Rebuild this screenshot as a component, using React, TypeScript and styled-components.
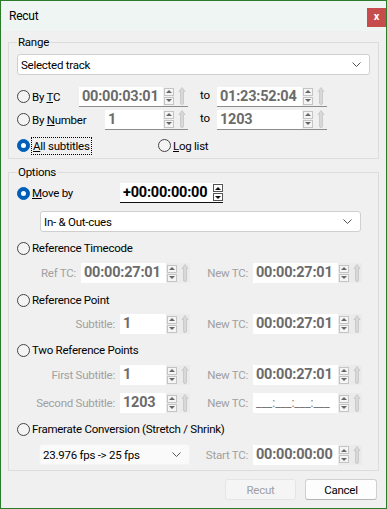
import React from "react";
import styled, { createGlobalStyle } from "styled-components";

const Global = createGlobalStyle`
  html, body { margin: 0; padding: 0; background: #ffffff; }
`;

const Window = styled.div`
  width: 387px;
  height: 509px;
  box-sizing: border-box;
  border: 1px solid #2b7d2b;
  background: #f0f0f0;
  display: flex;
  flex-direction: column;
  font-family: "Segoe UI", Roboto, "Liberation Sans", sans-serif;
  font-size: 11.5px;
  letter-spacing: -0.25px;
  color: #000;
`;

const TitleBar = styled.div`
  height: 30px;
  flex: none;
  background: #eef5f2;
  display: flex;
  align-items: flex-start;
  justify-content: space-between;
  padding-left: 8px;
`;

const Title = styled.div`
  margin-top: 7px;
  line-height: 16px;
  font-size: 12px;
`;

const CloseButton = styled.div`
  width: 19px;
  height: 19px;
  margin-top: 7px;
  background: #c74d4d;
  color: #fff;
  font-weight: 700;
  font-size: 11px;
  line-height: 1;
  display: flex;
  align-items: center;
  justify-content: center;
  padding-bottom: 2px;
  box-sizing: border-box;
`;

const Body = styled.div`
  display: flex;
  flex-direction: column;
  padding: 0 7px;
`;

const Group = styled.fieldset<{ $mt: number; $pt: number }>`
  margin: ${(p) => p.$mt}px 0 0;
  padding: ${(p) => p.$pt}px 8px 1px;
  border: 1px solid #dcdcdc;
  min-inline-size: 0;
  display: flex;
  flex-direction: column;
`;

const Legend = styled.legend`
  padding: 0 1px;
  line-height: 16px;
`;

const Combo = styled.div<{ $mt?: number; $w?: number; $ml?: number; $disabled?: boolean }>`
  margin-top: ${(p) => p.$mt || 0}px;
  margin-left: ${(p) => p.$ml || 0}px;
  width: ${(p) => (p.$w ? `${p.$w}px` : "auto")};
  height: 21px;
  box-sizing: border-box;
  background: ${(p) => (p.$disabled ? "#fafafa" : "#fff")};
  border: 1px solid ${(p) => (p.$disabled ? "#f3f3f3" : "#cfcfcf")};
  border-radius: 3px;
  display: flex;
  align-items: center;
  justify-content: space-between;
  padding: 0 8px 0 3px;
  flex: none;
`;

const Chevron = () => (
  <svg width="9" height="5" viewBox="0 0 9 5">
    <polyline points="0.5,0.5 4.5,4.5 8.5,0.5" fill="none" stroke="#555" strokeWidth="1" />
  </svg>
);

const RangeRow = styled.div<{ $mt?: number }>`
  margin-top: ${(p) => p.$mt || 0}px;
  height: 23px;
  display: flex;
  align-items: center;
`;

const RangeLeft = styled.div<{ $w?: number }>`
  width: ${(p) => p.$w || 171}px;
  flex: none;
  display: flex;
  align-items: center;
  justify-content: space-between;
`;

const To = styled.div`
  width: 29px;
  box-sizing: border-box;
  padding-left: 12px;
  padding-bottom: 3px;
`;

const RadioLabel = styled.label<{ $mt?: number; $h?: number }>`
  margin-top: ${(p) => p.$mt || 0}px;
  height: ${(p) => p.$h || 20}px;
  display: flex;
  align-items: center;
  gap: 2px;
  white-space: nowrap;
`;

const RadioCircle = styled.span<{ $checked?: boolean }>`
  width: 13px;
  height: 13px;
  box-sizing: border-box;
  border-radius: 50%;
  flex: none;
  display: flex;
  align-items: center;
  justify-content: center;
  border: 1px solid ${(p) => (p.$checked ? "#005fb8" : "#444")};
  background: ${(p) => (p.$checked ? "#005fb8" : "#f4f4f4")};
  &::after {
    content: "";
    display: ${(p) => (p.$checked ? "block" : "none")};
    width: 5px;
    height: 5px;
    border-radius: 50%;
    background: #fff;
  }
`;

const Focus = styled.span`
  outline: 1px dotted #000;
  outline-offset: 0;
  padding: 0 1px;
  line-height: 16px;
`;

const SpinBox = styled.div<{ $underline?: string }>`
  display: flex;
  height: 20px;
  box-sizing: border-box;
  border-bottom: ${(p) => (p.$underline ? `1px solid ${p.$underline}` : "none")};
`;

const Field = styled.div<{ $w: number; $color: string }>`
  width: ${(p) => p.$w}px;
  background: #fff;
  color: ${(p) => p.$color};
  font-weight: 700;
  font-size: 14.5px;
  letter-spacing: -0.2px;
  line-height: 19px;
  padding-left: 3px;
  box-sizing: border-box;
  white-space: nowrap;
  overflow: hidden;
`;

const Mask = styled.span`
  font-weight: 400;
  font-size: 12px;
  color: #777;
  letter-spacing: 0;
`;

const SpinArea = styled.div<{ $w: number; $bg: string }>`
  width: ${(p) => p.$w}px;
  background: ${(p) => p.$bg};
  display: flex;
  align-items: center;
  padding-left: 1px;
  gap: 4px;
  box-sizing: border-box;
`;

const SpinStack = styled.div`
  display: flex;
  flex-direction: column;
  gap: 1px;
`;

const SpinBtn = styled.div<{ $dir: "up" | "down"; $dark?: boolean }>`
  width: 10px;
  height: 8px;
  box-sizing: border-box;
  border: 1px solid ${(p) => (p.$dark ? "#555" : "#c4c4c4")};
  background: ${(p) => (p.$dark ? "#fff" : "#f5f5f5")};
  display: flex;
  align-items: center;
  justify-content: center;
  &::after {
    content: "";
    border-left: 3px solid transparent;
    border-right: 3px solid transparent;
    ${(p) =>
      p.$dir === "up"
        ? `border-bottom: 3px solid ${p.$dark ? "#111" : "#666"};`
        : `border-top: 3px solid ${p.$dark ? "#111" : "#666"};`}
  }
`;

const Thumb = () => (
  <svg width="8" height="18" viewBox="0 0 8 18">
    <path d="M4 0.5 L7 4.5 H5.5 V16 Q5.5 17.5 4 17.5 Q2.5 17.5 2.5 16 V4.5 H1 Z" fill="#d8d8d8" stroke="#c4c4c4" strokeWidth="0.8" />
  </svg>
);

type SpinProps = {
  value: React.ReactNode;
  w: number;
  variant: "range" | "disabled" | "active";
};

const Spin = ({ value, w, variant }: SpinProps) => {
  const underline = variant === "range" ? "#8c8c8c" : variant === "active" ? "#111" : undefined;
  const color = variant === "active" ? "#000" : "#6b6b6b";
  return (
    <SpinBox $underline={underline}>
      <Field $w={w} $color={color}>
        {value}
      </Field>
      {variant === "active" ? (
        <SpinArea $w={11} $bg="#fff">
          <SpinStack>
            <SpinBtn $dir="up" $dark />
            <SpinBtn $dir="down" $dark />
          </SpinStack>
        </SpinArea>
      ) : (
        <SpinArea $w={variant === "range" ? 25 : 24} $bg={variant === "range" ? "#f0f0f0" : "#ebebeb"}>
          <SpinStack>
            <SpinBtn $dir="up" />
            <SpinBtn $dir="down" />
          </SpinStack>
          <Thumb />
        </SpinArea>
      )}
    </SpinBox>
  );
};

const MoveRow = styled.div`
  height: 22px;
  display: flex;
  align-items: center;
`;

const MoveLabel = styled(RadioLabel)`
  width: 103px;
`;

const SubRow = styled.div<{ $mt: number }>`
  margin-top: ${(p) => p.$mt}px;
  height: 20px;
  display: grid;
  grid-template-columns: 173px 172px;
`;

const Cell = styled.div`
  display: flex;
  align-items: center;
  justify-content: flex-end;
  gap: 5px;
`;

const FieldLabel = styled.span`
  color: #a0a0a0;
  white-space: nowrap;
`;

const Spacer = styled.div<{ $h: number }>`
  height: ${(p) => p.$h}px;
`;

const Footer = styled.div`
  margin-top: 8px;
  display: flex;
  justify-content: flex-end;
  gap: 9px;
  padding-right: 2px;
`;

const Button = styled.div<{ $disabled?: boolean; $w: number }>`
  width: ${(p) => p.$w}px;
  height: 21px;
  box-sizing: border-box;
  border-radius: 3px;
  display: flex;
  align-items: center;
  justify-content: center;
  background: ${(p) => (p.$disabled ? "#f5f5f5" : "#fdfdfd")};
  border: 1px solid ${(p) => (p.$disabled ? "#e5e5e5" : "#d0d0d0")};
  border-bottom-color: ${(p) => (p.$disabled ? "#e5e5e5" : "#b5b5b5")};
  color: ${(p) => (p.$disabled ? "#a0a0a0" : "#000")};
`;

export default function App() {
  return (
    <>
      <Global />
      <Window>
        <TitleBar>
          <Title>Recut</Title>
          <CloseButton>x</CloseButton>
        </TitleBar>
        <Body>
          <Group $mt={3} $pt={4}>
            <Legend>Range</Legend>
            <Combo>
              <span>Selected track</span>
              <Chevron />
            </Combo>
            <RangeRow $mt={10}>
              <RangeLeft>
                <RadioLabel>
                  <RadioCircle />
                  <span>
                    By <u>T</u>C
                  </span>
                </RadioLabel>
                <Spin value="00:00:03:01" w={84} variant="range" />
              </RangeLeft>
              <To>to</To>
              <Spin value="01:23:52:04" w={85} variant="range" />
            </RangeRow>
            <RangeRow>
              <RangeLeft>
                <RadioLabel>
                  <RadioCircle />
                  <span>
                    By <u>N</u>umber
                  </span>
                </RadioLabel>
                <Spin value="1" w={58} variant="range" />
              </RangeLeft>
              <To>to</To>
              <Spin value="1203" w={85} variant="range" />
            </RangeRow>
            <RangeRow $mt={3}>
              <RangeLeft $w={141}>
                <RadioLabel>
                  <RadioCircle $checked />
                  <Focus>
                    <u>A</u>ll subtitles
                  </Focus>
                </RadioLabel>
              </RangeLeft>
              <RadioLabel>
                <RadioCircle />
                <span>
                  <u>L</u>og list
                </span>
              </RadioLabel>
            </RangeRow>
          </Group>

          <Group $mt={5} $pt={2}>
            <Legend>Options</Legend>
            <MoveRow>
              <MoveLabel>
                <RadioCircle $checked />
                <span>
                  <u>M</u>ove by
                </span>
              </MoveLabel>
              <Spin value="+00:00:00:00" w={92} variant="active" />
            </MoveRow>
            <Combo $mt={7} $ml={23} $w={321}>
              <span>In- &amp; Out-cues</span>
              <Chevron />
            </Combo>

            <RadioLabel $mt={6}>
              <RadioCircle />
              <span>Reference Timecode</span>
            </RadioLabel>
            <SubRow $mt={5}>
              <Cell>
                <FieldLabel>Ref TC:</FieldLabel>
                <Spin value="00:00:27:01" w={85} variant="disabled" />
              </Cell>
              <Cell>
                <FieldLabel>New TC:</FieldLabel>
                <Spin value="00:00:27:01" w={85} variant="disabled" />
              </Cell>
            </SubRow>

            <RadioLabel $mt={7}>
              <RadioCircle />
              <span>Reference Point</span>
            </RadioLabel>
            <SubRow $mt={4}>
              <Cell>
                <FieldLabel>Subtitle:</FieldLabel>
                <Spin value="1" w={46} variant="disabled" />
              </Cell>
              <Cell>
                <FieldLabel>New TC:</FieldLabel>
                <Spin value="00:00:27:01" w={85} variant="disabled" />
              </Cell>
            </SubRow>

            <RadioLabel $mt={6}>
              <RadioCircle />
              <span>Two Reference Points</span>
            </RadioLabel>
            <SubRow $mt={5}>
              <Cell>
                <FieldLabel>First Subtitle:</FieldLabel>
                <Spin value="1" w={46} variant="disabled" />
              </Cell>
              <Cell>
                <FieldLabel>New TC:</FieldLabel>
                <Spin value="00:00:27:01" w={85} variant="disabled" />
              </Cell>
            </SubRow>
            <SubRow $mt={8}>
              <Cell>
                <FieldLabel>Second Subtitle:</FieldLabel>
                <Spin value="1203" w={46} variant="disabled" />
              </Cell>
              <Cell>
                <FieldLabel>New TC:</FieldLabel>
                <Spin value={<Mask>___:___:___:___</Mask>} w={85} variant="disabled" />
              </Cell>
            </SubRow>

            <RadioLabel $mt={6}>
              <RadioCircle />
              <span>Framerate Conversion (Stretch / Shrink)</span>
            </RadioLabel>
            <SubRow $mt={5}>
              <Cell>
                <Combo $w={151} $disabled>
                  <span>23.976 fps -&gt; 25 fps</span>
                  <Chevron />
                </Combo>
              </Cell>
              <Cell>
                <FieldLabel>Start TC:</FieldLabel>
                <Spin value="00:00:00:00" w={85} variant="disabled" />
              </Cell>
            </SubRow>
            <Spacer $h={5} />
          </Group>

          <Footer>
            <Button $disabled $w={71}>
              Recut
            </Button>
            <Button $w={72}>Cancel</Button>
          </Footer>
        </Body>
      </Window>
    </>
  );
}
